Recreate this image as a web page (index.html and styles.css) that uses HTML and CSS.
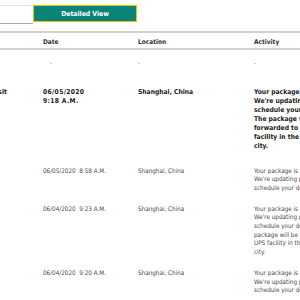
FILE: index.html
```html
<!DOCTYPE html>
<html>
<head>
<meta charset="utf-8">
<link rel="stylesheet" href="styles.css">
</head>
<body>
<div class="page">
  <div class="toolbar">
    <div class="field"></div>
    <button class="btn">Detailed View</button>
  </div>
  <div class="table">
    <div class="row head">
      <div class="c status"></div>
      <div class="c">Date</div>
      <div class="c">Location</div>
      <div class="c">Activity</div>
    </div>
    <div class="row dash">
      <div class="c status"></div>
      <div class="c indent">-</div>
      <div class="c">-</div>
      <div class="c">-</div>
    </div>
    <div class="row current">
      <div class="c status">In Transit</div>
      <div class="c when">06/05/2020<br>9:18 A.M.</div>
      <div class="c">Shanghai, China</div>
      <div class="c act">Your package is in transit. We're updating plans to schedule your delivery. The package will be forwarded to a UPS facility in the destination city.</div>
    </div>
    <div class="row">
      <div class="c status"></div>
      <div class="c">06/05/2020&nbsp;&nbsp;8:58 A.M.</div>
      <div class="c">Shanghai, China</div>
      <div class="c act">Your package is in transit. We're updating plans to schedule your delivery.</div>
    </div>
    <div class="row">
      <div class="c status"></div>
      <div class="c">06/04/2020&nbsp;&nbsp;9:23 A.M.</div>
      <div class="c">Shanghai, China</div>
      <div class="c act">Your package is in transit. We're updating plans to schedule your delivery. The package will be forwarded to a UPS facility in the destination city.</div>
    </div>
    <div class="row">
      <div class="c status"></div>
      <div class="c">06/04/2020&nbsp;&nbsp;9:20 A.M.</div>
      <div class="c">Shanghai, China</div>
      <div class="c act">Your package is in transit. We're updating plans to schedule your delivery.</div>
    </div>
  </div>
</div>
</body>
</html>
```

FILE: styles.css
```css
html, body {
  margin: 0;
  padding: 0;
  background: #ffffff;
  overflow: hidden;
}
body {
  width: 300px;
  height: 300px;
  font-family: "DejaVu Sans Condensed", "DejaVu Sans", Verdana, sans-serif;
}
.page {
  margin-left: -60px;
  width: 460px;
}
.toolbar {
  display: flex;
  padding-top: 5px;
  height: 18px;
}
.field {
  width: 93px;
  border: 1px solid #e2e2e2;
  border-bottom-color: #a8a8a8;
  border-right: none;
  box-sizing: border-box;
  height: 19px;
}
.btn {
  width: 104px;
  height: 17px;
  margin: 0;
  padding: 0;
  background: #0b8478;
  border: 1px solid #e9c21c;
  box-shadow: 0 0 1px #f3d85a;
  color: #ffffff;
  font-family: "DejaVu Sans Condensed", "DejaVu Sans", Verdana, sans-serif;
  font-weight: bold;
  font-size: 6.8px;
  text-align: center;
}
.table {
  margin-top: 8px;
}
.row {
  display: grid;
  grid-template-columns: 103px 95px 116px 91px;
  padding: 7.5px 0 5px;
  font-size: 6.3px;
  line-height: 8.6px;
  color: #4a4a4a;
}
.act {
  padding-right: 3px;
}
.row.head {
  border-top: 2px solid #d6d0c9;
  border-bottom: 2px solid #d6d0c9;
  padding: 5px 0 5px;
  height: 19px;
  box-sizing: border-box;
  font-weight: bold;
  font-size: 6.5px;
  color: #333333;
}
.row.dash {
  padding: 9px 0 9px;
  color: #888888;
}
.row.current {
  padding: 11px 0 8.5px;
  font-weight: bold;
  font-size: 6.7px;
  line-height: 9px;
  color: #222222;
}
.row.current .act {
  padding-right: 0;
}
.row.current .when {
  letter-spacing: 0.35px;
}
.status {
  padding-left: 35px;
}
.indent {
  padding-left: 7px;
}
```
